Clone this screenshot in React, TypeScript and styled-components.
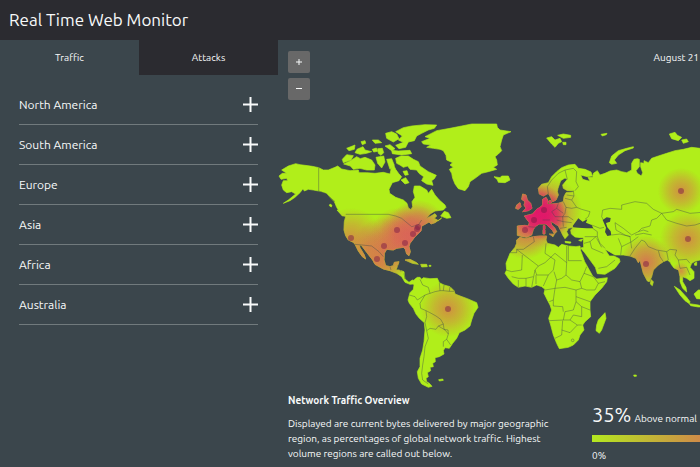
import React, { useState } from "react";
import styled, { createGlobalStyle } from "styled-components";

const GlobalStyle = createGlobalStyle`
  * { box-sizing: border-box; }
  body {
    margin: 0;
    background: #3b464c;
    color: #f8fafa;
    font-family: Ubuntu, "Noto Sans", sans-serif;
  }
  button { font: inherit; color: inherit; border: 0; padding: 0; cursor: pointer; }
`;

const Page = styled.div`
  min-height: 100vh;
  overflow: hidden;
`;

const Header = styled.header`
  display: flex;
  align-items: center;
  height: 40px;
  padding: 0 9px;
  background: #2b2b30;
`;

const Title = styled.h1`
  margin: 0;
  font-size: 17px;
  line-height: 24px;
  font-weight: 400;
`;

const Body = styled.div`
  display: grid;
  grid-template-columns: 278px minmax(0, 1fr);
`;

const Tabs = styled.div`
  display: grid;
  grid-template-columns: 1fr 1fr;
`;

const Tab = styled.button<{ $active: boolean }>`
  height: 35px;
  font-size: 10px;
  background: ${(p) => (p.$active ? "transparent" : "#2b2b30")};
`;

const RegionList = styled.ul`
  margin: 0;
  padding: 10px 20px 0 19px;
  list-style: none;
`;

const Region = styled.li`
  border-bottom: 1px solid #717a7d;
`;

const RegionButton = styled.button`
  display: flex;
  align-items: center;
  justify-content: space-between;
  width: 100%;
  height: 39px;
  font-size: 12px;
  background: transparent;
`;

const Main = styled.main`
  min-width: 0;
`;

const MapBar = styled.div`
  display: flex;
  justify-content: space-between;
  align-items: flex-start;
  height: 60px;
  padding: 11px 0 0 10px;
`;

const ZoomButtons = styled.div`
  display: flex;
  flex-direction: column;
  gap: 5px;
`;

const ZoomButton = styled.button`
  display: grid;
  place-items: center;
  width: 22px;
  height: 22px;
  border-radius: 2px;
  background: #686868;
`;

const DateLabel = styled.time`
  font-size: 10px;
  line-height: 14px;
  padding-right: 1px;
`;

const WorldMap = styled.svg`
  display: block;
  width: 100%;
  height: auto;
`;

const Footer = styled.section`
  display: flex;
  justify-content: space-between;
  padding: 2px 0 4px 10px;
`;

const Overview = styled.div`
  width: 272px;
  font-size: 10px;
  line-height: 15px;
`;

const OverviewTitle = styled.h2`
  margin: 0 0 7px;
  font-size: 10px;
  line-height: 16px;
  font-weight: 600;
`;

const Text = styled.p`
  margin: 0;
`;

const Legend = styled.div`
  width: 108px;
  padding-top: 8px;
  font-size: 10px;
  line-height: 16px;
  white-space: nowrap;
`;

const LegendHead = styled.div`
  display: flex;
  align-items: baseline;
  gap: 3px;
  line-height: 28px;
`;

const Percent = styled.span`
  font-size: 20px;
`;

const Scale = styled.div`
  height: 7px;
  margin: 2px 0 6px;
  background: linear-gradient(90deg, #b4e820, #cf8b48);
`;

const regions = ["North America", "South America", "Europe", "Asia", "Africa", "Australia"];

const americas = [
  "M40 168L62 161 75 164 90 166 112 169 131 173 145 180 160 180 180 172 188 168 200 177 225 182 250 180 252 188 275 188 300 190 325 187 345 192 350 170 356 165 362 178 372 192 380 200 372 212 352 218 342 238 344 250 362 262 385 270 396 280 400 294 408 299 413 290 411 275 420 262 415 245 418 228 435 228 455 240 460 250 470 238 480 255 493 270 510 285 513 292 505 300 480 303 465 312 452 328 458 324 480 311 485 318 478 325 490 332 500 324 480 338 468 342 462 336 450 343 440 348 438 363 420 380 405 400 402 410 406 425 402 437 395 432 391 418 385 412 365 415 355 420 335 418 328 430 327 450 332 467 345 470 355 467 358 457 372 455 368 467 363 480 372 480 387 485 390 507 402 517 412 510 420 512 416 522 405 523 390 517 380 500 365 490 345 482 325 477 300 463 293 450 275 427 260 407 252 403 255 413 268 435 272 447 262 440 250 423 240 403 235 397 220 390 212 377 207 360 208 335 212 320 195 308 185 292 178 275 165 262 155 250 140 245 131 243 115 240 100 238 88 243 84 236 75 248 60 262 45 272 25 280 40 270 62 252 50 245 35 248 25 240 20 225 25 212 38 212 35 205 18 208 12 198 22 190 35 190 20 180Z",
  "M202 148L215 134 235 137 228 150 205 158Z",
  "M206 162L225 153 245 140 256 146 270 142 290 150 300 165 298 180 275 180 255 175 235 178 226 168Z",
  "M215 115L240 105 238 118 222 122Z",
  "M240 128L246 118 264 110 270 120 290 125 275 130 255 133Z",
  "M258 95L270 92 272 100 262 104Z",
  "M292 90L310 90 320 98 300 100Z",
  "M292 118L304 114 308 124 296 126Z",
  "M308 116L322 115 326 128 318 136 310 130Z",
  "M330 108L345 104 360 116 350 122Z",
  "M303 142L326 138 330 156 320 174 308 160Z",
  "M335 148L350 146 358 166 345 178Z",
  "M332 70L350 65 365 72 372 86 355 96 335 85Z",
  "M362 65L385 53 410 48 450 44 485 45 478 55 460 60 440 70 425 78 418 92 400 96 392 112 372 116 362 106 385 97 370 90 382 78Z",
  "M350 121L370 123 405 121 410 131 380 135 352 131Z",
  "M362 145L378 138 400 138 415 148 430 155 435 168 460 185 484 196 478 206 470 212 474 226 455 222 440 212 446 200 432 190 425 180 405 178 398 168 385 172 375 165 365 160Z",
  "M378 210L392 203 402 218 390 222Z",
  "M384 184L396 182 400 194 390 196Z",
  "M497 318L508 304 520 308 528 323 515 325Z",
  "M186 300L196 305 210 318 202 318Z",
  "M165 282l6 4 -2 5 -6 -4Z",
  "M390 450L405 448 425 458 430 463 412 460Z",
  "M437 463L455 463 457 470 440 471Z",
  "M462 466h6v3h-6Z",
];

const northAtlantic = [
  "M65 95L90 85 75 80 110 62 150 55 185 48 215 42 290 42 292 52 300 60 333 65 310 75 305 90 300 110 305 122 295 132 285 140 290 150 292 165 280 172 290 178 265 185 245 190 225 205 210 215 205 230 195 242 175 236 165 222 158 205 155 190 148 178 160 172 150 165 158 158 140 150 138 136 130 122 120 118 100 115 80 112 92 105 70 102Z",
  "M282 200L300 203 305 198 325 198 330 210 315 218 295 217 292 209Z",
];

const southAmerica = [
  "M90 128L100 118 102 105 98 98 104 88 112 82 120 82 125 88 130 83 150 86 172 85 178 98 192 105 210 110 222 122 225 132 240 138 262 146 290 158 294 172 282 190 275 210 270 228 255 240 238 248 230 265 218 280 208 295 195 293 190 302 192 312 178 320 165 323 166 335 158 340 160 350 150 352 152 362 142 368 145 380 138 385 140 395 148 400 156 409 145 412 125 402 115 385 112 365 120 350 120 325 128 300 132 275 135 240 133 218 118 205 108 192 100 175 88 160 84 150Z",
  "M176 389L188 387 190 391 178 393Z",
];

const eurasia = [
  "M85 205L95 193 115 188 125 170 140 155 155 143 175 135 195 133 205 145 225 148 243 156 247 168 232 170 212 165 218 178 240 184 234 172 248 172 250 160 262 152 270 165 285 160 300 153 320 150 335 155 350 158 365 150 365 130 372 118 382 116 388 118 388 140 378 152 382 160 394 168 398 158 392 140 392 128 402 130 402 122 415 128 425 115 445 108 470 100 495 92 520 88 545 82 570 85 610 95 610 385 225 385 223 378 224 352 212 353 195 351 184 342 182 330 190 322 175 325 170 335 175 345 165 356 158 345 152 332 145 318 130 308 122 303 125 315 135 325 140 335 133 342 128 332 118 322 108 312 98 312 88 312 78 318 70 328 65 345 50 352 38 350 22 346 22 318 45 316 55 318 58 308 52 300 43 288 55 285 68 282 80 268 90 262 98 255 98 238 108 232 113 240 112 252 125 252 145 250 160 245 162 230 168 218 190 216 190 212 172 212 160 205 158 195 172 178 165 174 152 182 144 205 142 215 145 225 138 240 128 245 122 232 115 220 100 228 88 222Z",
  "M38 222L48 225 52 240 62 250 66 265 55 272 38 275 48 265 42 255 45 245 35 238Z",
  "M20 255L30 248 33 260 25 268 17 265Z",
  "M116 243l7 -2 1 8 -7 0Z",
  "M100 317h5v10h-5Z",
  "M99 329h6v13h-6Z",
  "M118 342L133 343 129 350Z",
  "M165 364L183 366 181 370 166 368Z",
  "M206 361L218 357 214 364Z",
  "M110 54L125 50 135 60 150 55 155 65 145 70 135 82 125 72Z",
  "M143 46L160 42 182 46 182 52 160 55Z",
  "M158 67h10v7h-8Z",
  "M273 43L291 40 289 44 277 48Z",
  "M298 128L305 108 325 92 350 85 370 80 370 84 345 92 325 105 313 120 320 130 305 133Z",
  "M478 42L495 37 502 46 515 52 505 62 485 56Z",
  "M515 60L530 57 535 65 520 70Z",
];

const africaAndSouthAsia = [
  "M80 90L90 82 105 86 130 80 150 78 170 78 168 90 172 100 195 105 205 112 215 103 235 108 258 110 270 108 272 122 284 155 298 180 308 198 320 207 352 203 350 215 335 235 315 255 300 275 300 300 302 320 285 335 278 345 282 360 270 375 265 390 250 405 235 412 208 416 200 400 190 375 182 345 176 325 185 300 180 285 172 270 162 250 165 238 155 230 140 225 125 232 105 228 85 232 70 222 55 205 45 190 50 180 48 160 60 130 75 112 80 100Z",
  "M345 308L348 325 335 360 328 370 318 362 320 345 325 330Z",
  "M280 80L281 112 272 114 284 128 300 150 316 172 322 191 345 193 375 175 390 155 388 146 372 138 358 138 345 118 358 125 375 135 400 135 420 138 438 145 445 158 450 150 455 170 460 190 472 213 478 215 485 200 490 180 505 165 520 155 532 150 540 156 545 165 552 174 566 180 570 200 570 215 578 235 590 246 588 232 578 215 578 200 590 205 600 212 612 205 612 185 600 172 605 160 615 154 630 150 670 145 670 80Z",
  "M483 209L490 215 487 227 481 222Z",
  "M553 229L570 240 590 262 600 275 598 281 585 272 570 255Z",
  "M598 281L625 285 642 290 625 291 602 287Z",
  "M612 252L625 240 650 240 650 268 620 266Z",
  "M613 160L620 156 620 166 614 166Z",
  "M431 495h8v4h-7Z",
];

const seas = [
  "M1718 678L1735 655 1748 665 1762 658 1758 668 1775 675 1780 685 1760 685 1735 683 1720 682Z",
  "M1808 660L1820 652 1832 654 1830 665 1818 669 1822 682 1832 694 1834 706 1822 708 1815 696 1818 683Z",
];

const borders = [
  { at: "825 330", d: "M131 173V243L150 250 165 262 180 275M212 313H340L362 318 380 325 392 335 410 350 430 345 440 330M240 403L262 405 290 408 312 425 325 440M345 470L348 480M368 467L378 485M390 507L387 490" },
  { at: "1140 750", d: "M120 88L128 105 145 112 150 130 165 125 180 122 178 98M192 105L190 122H180M210 110L208 124H222M190 122L208 124M150 130L135 135 120 160 122 175 138 182 150 188 168 198 182 208 190 222 175 228 168 238 150 235 140 242 135 218M88 135L105 140 112 150 135 135M138 182L140 200 135 218M140 242L145 265 135 290 132 320 128 345 125 370 128 390 145 402M175 228L195 240 205 252 200 268 190 275V290M190 222L192 238 204 240 205 252M200 268L212 285" },
  { at: "1530 360", d: "M115 222L112 200 125 180 145 160 165 150 172 178M165 150L190 145 200 155 198 185 205 200 195 212M190 212L192 228 170 225M165 235L185 240 192 228M185 240L200 262M160 245L168 262 185 265 200 262 215 268 240 275 235 290 225 298M168 262L165 280 158 290 175 290 190 300M55 320L78 322M98 300L120 300M145 250L140 265 160 280M140 265L125 275 135 290 158 290M140 300L160 305 185 308M158 290L160 320M150 325L170 322M275 290L278 270 300 265 335 268 335 255 375 245 410 250 430 268 455 280 490 275 500 268 540 280 600 275M455 280L470 300 500 310 530 318 555 315 600 300M455 280L440 295 425 300 420 318 395 325 385 335 365 345 340 325 315 308M315 308L318 330 345 345 362 350M245 315L270 325 282 322M248 325L262 335V350H224M262 350L270 370 285 385M305 345L330 342 360 350 365 385M375 345L400 340 425 345M275 290L280 300M385 335L400 330 415 335" },
  { at: "1470 630", d: "M130 80L133 95 100 118 80 118V128H60M97 135L95 180 65 185 48 180M80 118L145 168 165 158 195 130M168 100L165 130 195 150 190 180 175 195 140 195 135 180 145 168M230 158V108M235 108V152H275M195 130L230 158 228 195 215 205 200 210 192 185M228 195L245 210 270 215 282 190 290 170M282 190L310 200 325 220 345 215M325 220L315 240 290 240 275 235 270 215M275 235L258 240 225 232 195 235 200 210M195 235L190 270 178 275M195 235L165 240M258 240V275L250 300 225 305 220 330 178 332M190 270V288L218 290 220 305M258 260L300 275M258 275L275 290 300 300M275 290V320L250 315 240 330 220 330M218 332L215 375 195 385M215 360L240 368 262 345 275 345M240 330L262 345M135 180L130 205 125 232M108 205V230M85 210V232M65 200L85 205 108 205 130 200M175 195L160 228M138 195V222M244 391a4 4 0 1 0 8 0a4 4 0 1 0 -8 0M282 100L300 95 318 80M300 95L305 115 340 130M325 175L350 170 375 150M335 112L320 85M392 135L395 110 385 85M395 110L425 95 445 80M420 138L435 115 455 90 465 95 475 110 500 120 530 125 540 118 560 120 555 135 565 150 570 175 590 172 600 195M530 125L535 150M565 150L590 148 600 160M505 122L510 140 520 155" },
];

type Heat = { x: number; y: number; r: number; tone: "amber" | "coral" | "rose" };

const heat: Heat[] = [
  { x: 351, y: 240, r: 32, tone: "amber" },
  { x: 384, y: 249, r: 32, tone: "coral" },
  { x: 377, y: 262, r: 30, tone: "amber" },
  { x: 397, y: 234, r: 26, tone: "amber" },
  { x: 412, y: 238, r: 34, tone: "coral" },
  { x: 418, y: 230, r: 30, tone: "coral" },
  { x: 525, y: 231, r: 28, tone: "coral" },
  { x: 546, y: 212, r: 36, tone: "coral" },
  { x: 528, y: 207, r: 24, tone: "coral" },
  { x: 537, y: 211, r: 28, tone: "rose" },
  { x: 545, y: 217, r: 24, tone: "rose" },
  { x: 448, y: 309, r: 28, tone: "amber" },
  { x: 681, y: 191, r: 23, tone: "amber" },
  { x: 688, y: 239, r: 28, tone: "amber" },
  { x: 646, y: 262, r: 26, tone: "coral" },
  { x: 681, y: 271, r: 9, tone: "amber" },
];

const tones = {
  amber: { color: "#d8794a", core: 0.8, mid: 0.45 },
  coral: { color: "#dc5c5c", core: 0.8, mid: 0.5 },
  rose: { color: "#e0146a", core: 0.9, mid: 0.6 },
};

const hubs = [
  [351, 238], [397, 230], [384, 246], [377, 259], [405, 243], [413, 234], [417, 229], [418, 227],
  [448, 309], [544, 210], [534, 220], [525, 230], [681, 191], [688, 239], [646, 264],
];

function PlusIcon({ size, width }: { size: number; width: number }) {
  const c = size / 2;
  return (
    <svg width={size} height={size} stroke="currentColor" strokeWidth={width} aria-hidden="true">
      <path d={`M0 ${c}H${size}M${c} 0V${size}`} />
    </svg>
  );
}

function MinusIcon() {
  return (
    <svg width={6} height={6} stroke="currentColor" strokeWidth={1} aria-hidden="true">
      <path d="M0 2.5H6" />
    </svg>
  );
}

function Shapes({ at, paths }: { at: string; paths: string[] }) {
  return (
    <g transform={`translate(${at})`}>
      {paths.map((d) => (
        <path key={d} d={d} />
      ))}
    </g>
  );
}

function TrafficMap() {
  return (
    <WorldMap viewBox="834 300 1266 873" role="img" aria-label="World traffic map">
      <defs>
        <g id="land" strokeWidth="2" strokeLinejoin="round">
          <Shapes at="825 330" paths={americas} />
          <Shapes at="1200 330" paths={northAtlantic} />
          <Shapes at="1140 750" paths={southAmerica} />
          <Shapes at="1530 360" paths={eurasia} />
          <Shapes at="1470 630" paths={africaAndSouthAsia} />
        </g>
        <mask id="landMask" maskUnits="userSpaceOnUse" x="834" y="300" width="1266" height="873">
          <use href="#land" fill="#fff" stroke="#fff" />
        </mask>
        {Object.entries(tones).map(([name, tone]) => (
          <radialGradient key={name} id={name}>
            <stop offset="0" stopColor={tone.color} stopOpacity={tone.core} />
            <stop offset="0.5" stopColor={tone.color} stopOpacity={tone.mid} />
            <stop offset="1" stopColor={tone.color} stopOpacity="0" />
          </radialGradient>
        ))}
      </defs>
      <use href="#land" fill="#b1ee1a" stroke="#b1ee1a" />
      <g mask="url(#landMask)">
        {heat.map((h) => (
          <circle key={`${h.x}-${h.y}`} cx={h.x * 3} cy={h.y * 3} r={h.r * 3} fill={`url(#${h.tone})`} />
        ))}
      </g>
      <g fill="none" stroke="#3b464c" strokeOpacity="0.6" strokeWidth="2" strokeLinejoin="round">
        {borders.map((b) => (
          <path key={b.at} transform={`translate(${b.at})`} d={b.d} />
        ))}
      </g>
      <g fill="#3b464c">
        {seas.map((d) => (
          <path key={d} d={d} />
        ))}
      </g>
      <g fill="#7c1c46" fillOpacity="0.5">
        {hubs.map(([x, y]) => (
          <circle key={`${x}-${y}`} cx={x * 3} cy={y * 3} r="9" />
        ))}
      </g>
    </WorldMap>
  );
}

export default function App() {
  const [tab, setTab] = useState("Traffic");
  return (
    <Page>
      <GlobalStyle />
      <Header>
        <Title>Real Time Web Monitor</Title>
      </Header>
      <Body>
        <aside>
          <Tabs role="tablist">
            {["Traffic", "Attacks"].map((name) => (
              <Tab key={name} role="tab" aria-selected={tab === name} $active={tab === name} onClick={() => setTab(name)}>
                {name}
              </Tab>
            ))}
          </Tabs>
          <RegionList>
            {regions.map((name) => (
              <Region key={name}>
                <RegionButton aria-expanded="false">
                  {name}
                  <PlusIcon size={15} width={2} />
                </RegionButton>
              </Region>
            ))}
          </RegionList>
        </aside>
        <Main>
          <MapBar>
            <ZoomButtons>
              <ZoomButton aria-label="Zoom in">
                <PlusIcon size={6} width={1} />
              </ZoomButton>
              <ZoomButton aria-label="Zoom out">
                <MinusIcon />
              </ZoomButton>
            </ZoomButtons>
            <DateLabel>August 21</DateLabel>
          </MapBar>
          <TrafficMap />
          <Footer>
            <Overview>
              <OverviewTitle>Network Traffic Overview</OverviewTitle>
              <Text>
                Displayed are current bytes delivered by major geographic region, as percentages of global network
                traffic. Highest volume regions are called out below.
              </Text>
            </Overview>
            <Legend>
              <LegendHead>
                <Percent>35%</Percent>
                <span>Above normal</span>
              </LegendHead>
              <Scale />
              <span>0%</span>
            </Legend>
          </Footer>
        </Main>
      </Body>
    </Page>
  );
}
